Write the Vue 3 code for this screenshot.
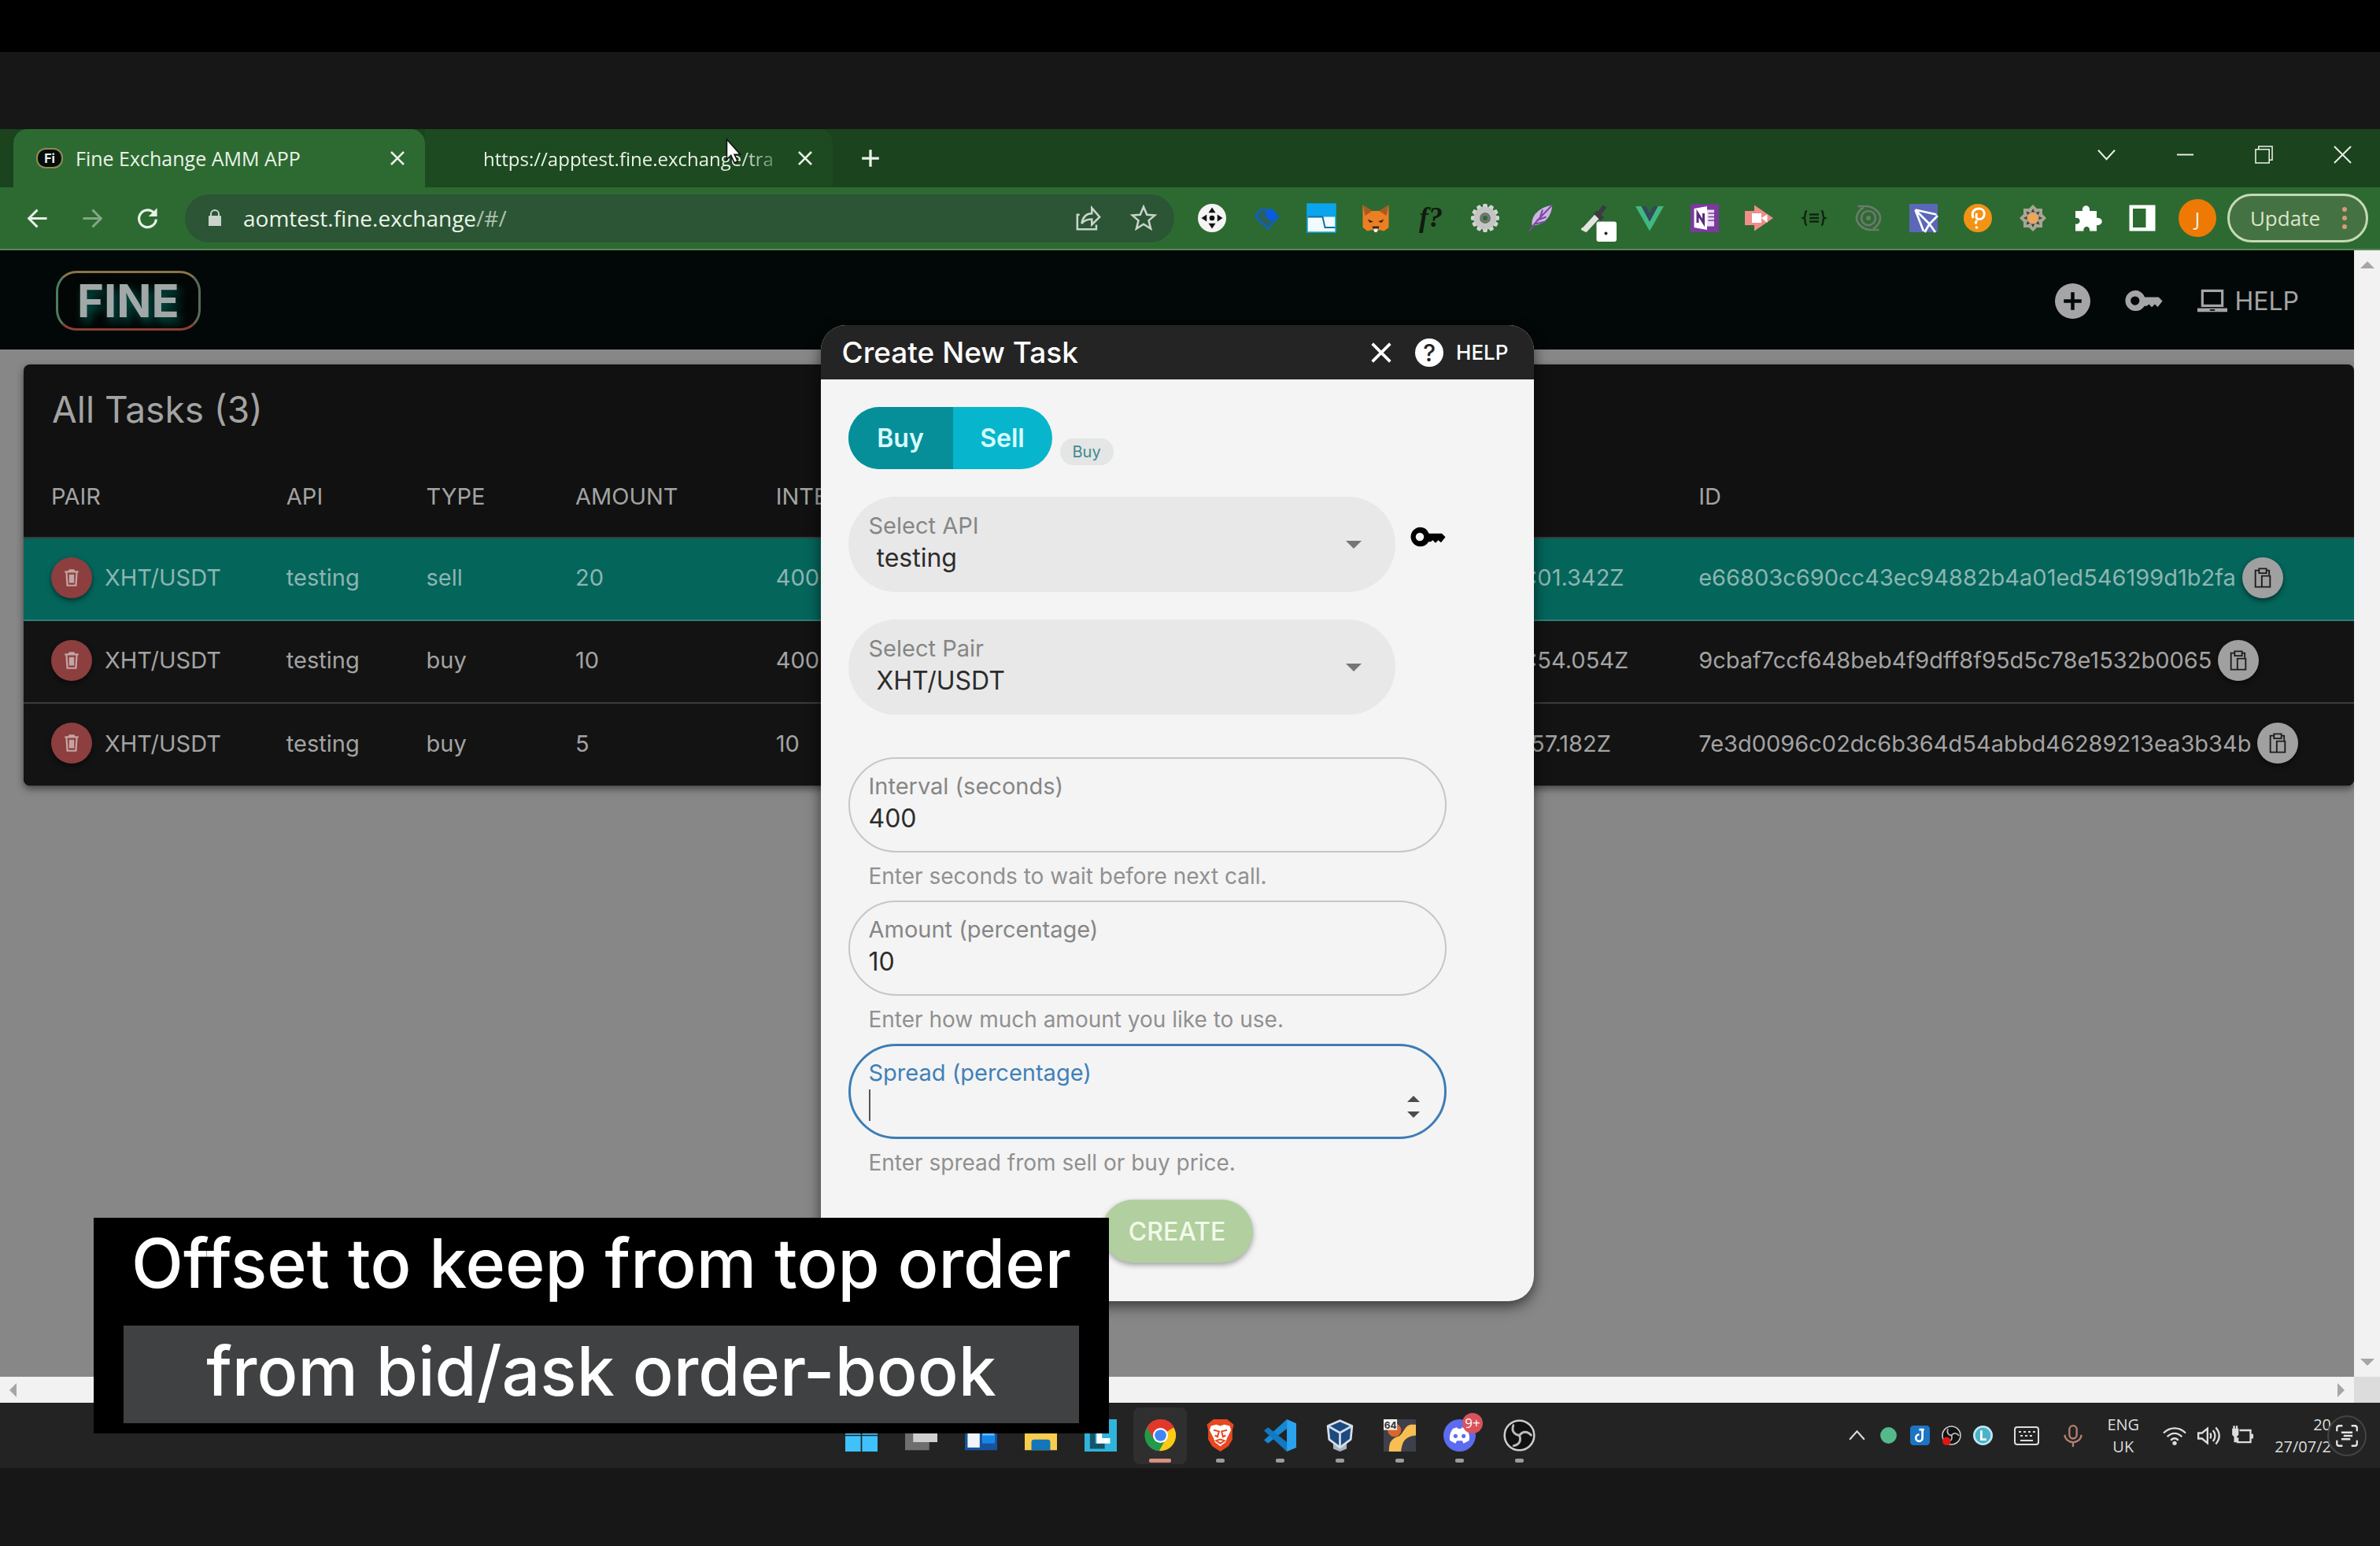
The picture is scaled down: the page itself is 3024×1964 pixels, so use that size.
<template>
  <div class="screen">
    <div class="top-strip"></div>

    <header class="browser">
      <div class="tab-strip">
        <div class="tab is-active">
          <span class="favicon">Fi</span>
          <span class="tab-title">Fine Exchange AMM APP</span>
          <button class="tab-close" aria-label="Close tab" v-html="icons.close"></button>
        </div>
        <div class="tab is-idle">
          <span class="tab-title">https://apptest.fine.exchange/tra</span>
          <button class="tab-close" aria-label="Close tab" v-html="icons.close"></button>
        </div>
        <button class="new-tab" aria-label="New tab" v-html="icons.plus"></button>
        <div class="window-controls">
          <button v-for="c in windowControls" :key="c.label" :aria-label="c.label" v-html="c.svg"></button>
        </div>
        <svg class="cursor" viewBox="0 0 18 30"><path d="M1 1v24l5-5 4 9 4-2-4-8h7z" fill="#fff" stroke="#111" stroke-width="1.5" /></svg>
      </div>

      <div class="toolbar">
        <button class="nav-btn" aria-label="Back" v-html="icons.back"></button>
        <button class="nav-btn is-off" aria-label="Forward" v-html="icons.forward"></button>
        <button class="nav-btn" aria-label="Reload" v-html="icons.reload"></button>
        <div class="address">
          <span class="lock" v-html="icons.lock"></span>
          <span class="url">aomtest.fine.exchange<span class="url-path">/#/</span></span>
          <button aria-label="Share" v-html="icons.share"></button>
          <button aria-label="Bookmark" v-html="icons.star"></button>
        </div>
        <div class="extensions">
          <button v-for="e in extensions" :key="e.label" :aria-label="e.label" v-html="e.svg"></button>
        </div>
        <button class="profile">J</button>
        <button class="update">Update <span class="dots"><i></i><i></i><i></i></span></button>
      </div>
    </header>

    <div class="viewport">
      <main class="page">
        <header class="app-bar">
          <a class="logo" href="#/">FINE</a>
          <nav class="app-nav">
            <button aria-label="Add task" v-html="icons.addCircle"></button>
            <button class="nav-key" aria-label="API keys" v-html="icons.key"></button>
            <a href="#/help"><span v-html="icons.laptop"></span>HELP</a>
          </nav>
        </header>

        <section class="card">
          <h1>All Tasks (3)</h1>
          <table>
            <colgroup>
              <col class="c-pair" /><col class="c-api" /><col class="c-type" /><col class="c-amount" />
              <col class="c-interval" /><col class="c-time" /><col />
            </colgroup>
            <thead>
              <tr>
                <th>PAIR</th><th>API</th><th>TYPE</th><th>AMOUNT</th><th>INTERVAL</th><th></th><th>ID</th>
              </tr>
            </thead>
            <tbody>
              <tr v-for="t in tasks" :key="t.id" :class="{ 'is-selected': t.type === 'sell' }">
                <td>
                  <div class="cell">
                    <button class="round is-delete" aria-label="Delete task" v-html="icons.trash"></button>{{ t.pair }}
                  </div>
                </td>
                <td>{{ t.api }}</td>
                <td>{{ t.type }}</td>
                <td>{{ t.amount }}</td>
                <td>{{ t.interval }}</td>
                <td>{{ t.time }}</td>
                <td>
                  <div class="cell is-id">
                    {{ t.id }}<button class="round is-copy" aria-label="Copy id" v-html="icons.clipboard"></button>
                  </div>
                </td>
              </tr>
            </tbody>
          </table>
        </section>
      </main>
      <div class="scroll-y"><i class="arrow is-up"></i><i class="arrow is-down"></i></div>
      <div class="scroll-x"><i class="arrow is-left"></i><i class="arrow is-right"></i></div>
      <div class="scroll-corner"></div>

      <div class="overlay">
        <div class="dialog" role="dialog" aria-labelledby="dialog-title">
          <div class="dialog-bar">
            <h2 id="dialog-title">Create New Task</h2>
            <button class="dialog-close" aria-label="Close" v-html="icons.close"></button>
            <a href="#/help"><span class="q">?</span>HELP</a>
          </div>
          <form class="dialog-body" @submit.prevent>
            <div class="side-row">
              <div class="side-toggle">
                <button type="button" :class="{ 'is-on': side === 'Buy' }" @click="side = 'Buy'">Buy</button>
                <button type="button" :class="{ 'is-on': side === 'Sell' }" @click="side = 'Sell'">Sell</button>
              </div>
              <span class="chip">{{ side }}</span>
            </div>

            <div class="select-row">
              <div class="field is-select">
                <label for="api">Select API</label>
                <select id="api" v-model="api"><option>testing</option></select>
              </div>
              <button type="button" class="row-key" aria-label="API keys" v-html="icons.key"></button>
            </div>
            <div class="select-row">
              <div class="field is-select">
                <label for="pair">Select Pair</label>
                <select id="pair" v-model="pair"><option>XHT/USDT</option></select>
              </div>
            </div>

            <div class="inputs">
              <template v-for="f in fields" :key="f.id">
                <div class="field is-outlined" :class="{ 'is-focused': f.focused }">
                  <label :for="f.id">{{ f.label }}</label>
                  <input :id="f.id" v-model="f.value" type="number" />
                  <i v-if="f.focused" class="caret"></i>
                  <span v-if="f.focused" class="spinner"><i class="up"></i><i class="down"></i></span>
                </div>
                <p class="hint">{{ f.hint }}</p>
              </template>
            </div>

            <button class="create" type="submit">CREATE</button>
          </form>
        </div>
      </div>
    </div>

    <footer class="taskbar">
      <div class="apps">
        <button v-for="a in apps" :key="a.label" :class="{ 'is-front': a.front, 'is-running': a.running }" :aria-label="a.label">
          <span v-html="a.svg"></span>
          <b v-if="a.badge" class="badge">{{ a.badge }}</b>
        </button>
      </div>
      <div class="tray">
        <span v-for="t in tray" :key="t.label" class="tray-icon" v-html="t.svg"></span>
        <span class="tray-icon is-wide" v-html="icons.keyboard"></span>
        <span class="tray-icon is-wide" v-html="icons.mic"></span>
        <span class="lang">ENG<br />UK</span>
        <span v-for="t in status" :key="t.label" class="tray-icon is-status" v-html="t.svg"></span>
        <span class="clock">20<br />27/07/2</span>
        <button class="scan" aria-label="Live text" v-html="icons.scan"></button>
      </div>
    </footer>
    <div class="bottom-strip"></div>

    <div class="caption">
      <p>Offset to keep from top order</p>
      <p class="is-second">from bid/ask order-book</p>
    </div>
  </div>
</template>

<script setup>
  import { ref, reactive } from 'vue';

  const side = ref('Buy');
  const api = ref('testing');
  const pair = ref('XHT/USDT');

  const fields = reactive([
    { id: 'interval', label: 'Interval (seconds)', value: 400, hint: 'Enter seconds to wait before next call.' },
    { id: 'amount', label: 'Amount (percentage)', value: 10, hint: 'Enter how much amount you like to use.' },
    { id: 'spread', label: 'Spread (percentage)', value: '', hint: 'Enter spread from sell or buy price.', focused: true },
  ]);

  const tasks = [
    { pair: 'XHT/USDT', api: 'testing', type: 'sell', amount: 20, interval: 400, time: ':01.342Z', id: 'e66803c690cc43ec94882b4a01ed546199d1b2fa' },
    { pair: 'XHT/USDT', api: 'testing', type: 'buy', amount: 10, interval: 400, time: ':54.054Z', id: '9cbaf7ccf648beb4f9dff8f95d5c78e1532b0065' },
    { pair: 'XHT/USDT', api: 'testing', type: 'buy', amount: 5, interval: 10, time: '57.182Z', id: '7e3d0096c02dc6b364d54abbd46289213ea3b34b' },
  ];

  const line = (d, w = 2, box = 24) =>
    `<svg viewBox="0 0 ${box} ${box}" fill="none" stroke="currentColor" stroke-width="${w}"><path d="${d}"/></svg>`;
  const solid = (d, box = '0 0 24 24') => `<svg viewBox="${box}" fill="currentColor" fill-rule="evenodd"><path d="${d}"/></svg>`;
  const svg = (body, box = '0 0 24 24') => `<svg viewBox="${box}">${body}</svg>`;

  const icons = {
    close: line('M4 4l16 16M20 4L4 20', 2.6),
    plus: line('M12 2v20M2 12h20', 3),
    back: line('M22 12H3M12 3l-9 9 9 9', 2.4),
    forward: line('M2 12h19M12 3l9 9-9 9', 2.4),
    reload: svg('<path d="M19 6.500A9 9 0 1 0 21 13" fill="none" stroke="currentColor" stroke-width="2.600"/><path d="M22 1v9h-9z" fill="currentColor"/>'),
    lock: solid('M5 9h1V7a6 6 0 0 1 12 0v2h1a1 1 0 0 1 1 1v12H4V10a1 1 0 0 1 1-1zm3 0h8V7a4 4 0 0 0-8 0z'),
    share: line('M4 9H2v13h17v-4M6 17c1-7 5-9 9-9V3l7 8-7 7v-5c-4 0-7 1-9 4z', 1.8),
    star: line('M12 2l3 7 7 .6-5.400 4.600 1.800 7.300L12 17.500l-6.400 4 1.800-7.300L2 9.600 9 9z', 1.8),
    addCircle: solid('M12 0a12 12 0 1 1 0 24 12 12 0 0 1 0-24zM10.800 6v4.800H6v2.400h4.800V18h2.400v-4.800H18v-2.400h-4.800V6z'),
    key: solid('M7 5a7 7 0 0 1 6.600 4.600H23l2.600 2.600-3.200 4-2-1.800-2 2-2-2-1.400 1.200h-1.600A7 7 0 1 1 7 5zm0 4a3 3 0 1 0 0 6 3 3 0 0 0 0-6z', '0 4 26 16'),
    laptop: solid('M3 3h18v14H3zM5 5v10h14V5zM0 18h24v3H0zm10 1v1h4v-1z'),
    trash: solid('M9 2h6l1 2h4v2h-1l-1 16H6L5 6H4V4h4zM7 6l1 14h8l1-14zm2 2h6v10H9z'),
    clipboard: svg('<path d="M8 4H4v18h7M16 4h3v5M8 2h8v5H8zM11 10h9v12h-9z" fill="none" stroke="#1c1c1c" stroke-width="1.600"/>'),
    keyboard: svg('<rect x="1" y="3" width="30" height="22" rx="3" fill="none" stroke="#ddd" stroke-width="2"/><path d="M6 9h3m3 0h3m3 0h3m3 0h3M8 14h3m3 0h3m3 0h3M8 20h16" stroke="#ddd" stroke-width="2"/>', '0 0 32 28'),
    mic: svg('<g fill="none" stroke="#b5806f" stroke-width="2"><rect x="8" y="1" width="8" height="14" rx="4"/><path d="M3 11a9 8 0 0 0 18 0M12 19v5"/></g>'),
    scan: line('M3 8V5a2 2 0 0 1 2-2h3M16 3h3a2 2 0 0 1 2 2v3M21 16v3a2 2 0 0 1-2 2h-3M8 21H5a2 2 0 0 1-2-2v-3M7 9h10M9 12h8M7 15h8', 1.6),
  };

  const windowControls = [
    { label: 'Search tabs', svg: line('M1 6l11 12L23 6', 2) },
    { label: 'Minimise', svg: line('M1 12h22', 2) },
    { label: 'Restore', svg: line('M1 5h18v18H1zM5 5V1h18v18h-4', 1.6) },
    { label: 'Close window', svg: line('M1 1l22 22M23 1L1 23', 2) },
  ];

  // petals and gear teeth are one shape turned round the centre
  const spin = (shape, n) => Array.from({ length: n }, (_, i) => `<g transform="rotate(${(360 / n) * i} 12 12)">${shape}</g>`).join('');
  const obs = '<circle cx="12" cy="12" r="11" fill="#111" stroke="#ccc" stroke-width="1.500"/>' +
    spin('<path d="M12 12C8 11.500 6 8.500 7.500 4.500" fill="none" stroke="#bbb" stroke-width="1.700" stroke-linecap="round"/>', 3);

  const extensions = [
    { label: 'Move', svg: svg('<circle cx="12" cy="12" r="12" fill="#f4f4f4"/><circle cx="12" cy="12" r="2.200" fill="#111"/>' + spin('<path d="M12 3l3 4.500H9z" fill="#111"/>', 4)) },
    { label: 'Gem', svg: svg('<path d="M6 5h11l5 6-9 10L3 11z" fill="#2b5f5c" stroke="#0b63cc" stroke-width="1.500"/><path d="M12 5h5l5 6-6 4-5-5z" fill="#0a5be0"/>') },
    { label: 'Window', svg: svg('<path d="M0 0h24v24H0z" fill="#f2fafd"/><path d="M0 0h24v11H0z" fill="#0aa5ec"/><path d="M0 11h13l2 9h9" fill="none" stroke="#136f9f" stroke-width="1.300"/><path d="M0 0h24v24H0z" fill="none" stroke="#0aa5ec"/>') },
    { label: 'Fox', svg: svg('<path d="M1 1l8 5h6l8-5v12l0 7-4 3-4-1-3 2-3-2-4 1-4-3v-7z" fill="#ec7f22"/><path d="M1 1l8 5-6 4zM23 1l-8 5 6 4z" fill="#a85a24"/><path d="M5 13l5 2-3 1zM19 13l-5 2 3 1zM9 19h6l-1 3h-4z" fill="#3a241b"/><path d="M10 21h4l-1 3h-2z" fill="#eee"/>') },
    { label: 'Function', svg: svg('<text x="12" y="19" text-anchor="middle" font-family="Liberation Serif, serif" font-style="italic" font-weight="700" font-size="24" fill="#101a10">f?</text>') },
    { label: 'Gear', svg: svg(spin('<path d="M10.500 0h3l1 4h-5z" fill="#d4d4d4"/>', 12) + '<circle cx="12" cy="12" r="7" fill="none" stroke="#c4c4c4" stroke-width="5"/><circle cx="12" cy="12" r="4" fill="#777"/><circle cx="12" cy="12" r="2" fill="#2d6a31"/>') },
    { label: 'Feather', svg: svg('<path d="M22 1C11 3 4 10 5 18c8 1 17-6 17-17z" fill="#cdb4e4"/><path d="M22 1C16 8 8 14 3 23M9 14l8-3M8 17l8-2M12 11l2-6" fill="none" stroke="#7a4aa5" stroke-width="1.400"/>') },
    { label: 'Picker', svg: svg('<path d="M3 21l-1 2M3 22L15 9" stroke="#e4e4de" stroke-width="5"/><path d="M12 7l6 6M14 10l6-8" stroke="#3d3a44" stroke-width="4"/><rect x="13" y="15" width="17" height="17" rx="2" fill="#fff"/><circle cx="21" cy="25" r="1.300" fill="#222"/>') },
    { label: 'Vue', svg: svg('<path d="M0 2h5l7 13 7-13h5L12 23z" fill="#41b883"/><path d="M5 2h4l3 6 3-6h4l-7 13z" fill="#34495e"/>') },
    { label: 'OneNote', svg: svg('<path d="M0 0h24v24H0z" fill="#7a3a9e"/><path d="M14 5h6v14h-6z" fill="#e9ddf2"/><path d="M15 8h5M15 11h5M15 14h5" stroke="#7a3a9e"/><path d="M3 4l11-2v20L3 20z" fill="#fff"/><path d="M6 16V8l5 8V8" fill="none" stroke="#5a2a7e" stroke-width="2"/>') },
    { label: 'Recorder', svg: svg('<path d="M0 6h8V1l16 11L8 23v-5H0z" fill="#ef8e8b"/><path d="M6 8h8v8H6zM14 12l5-3v7z" fill="#fff"/>') },
    { label: 'Json', svg: svg('<path d="M6 6C3 6 6 11 3 12c3 1 0 6 3 6M18 6c3 0 0 5 3 6-3 1 0 6-3 6M8 9h8M8 12h8M8 15h8" fill="none" stroke="#122412" stroke-width="1.600"/>') },
    { label: 'Swirl', svg: svg('<g fill="none" stroke="#6a7a6c" stroke-width="1.800"><path d="M3 2h8c7 1 11 6 11 10M21 22h-8C6 21 2 16 2 12"/><circle cx="12" cy="12" r="6"/><path d="M2 12c0-3 2-7 6-9M22 12c0 3-2 7-6 9"/></g><circle cx="12" cy="12" r="2" fill="#6a7a6c"/>') },
    { label: 'Mesh', svg: svg('<path d="M0 0h24v24H0z" fill="#5b67b8"/><path d="M5 5l18 4M5 5l7 18M5 5l12 12 7-7M17 17l-4 7M17 17l5 7" fill="none" stroke="#fff" stroke-width="1.800"/>') },
    { label: 'Pin', svg: svg('<circle cx="12" cy="12" r="12" fill="#f39314"/><path d="M8 12c-2-6 2-8 5-8 6 0 6 9 0 9-2 0-3-1-2-5M11 14l-1 3" fill="none" stroke="#fff" stroke-width="2"/><circle cx="11" cy="20" r="1.200" fill="#fff"/>') },
    { label: 'Sun', svg: svg('<path d="M4 4h16v16H4z" fill="#a9a695"/><path d="M4 4h16v16H4z" fill="#a9a695" transform="rotate(45 12 12)"/>' + spin('<path d="M10.500 7L12 4l1.500 3z" fill="#3d4436"/>', 8) + '<circle cx="12" cy="12" r="4.500" fill="#f0a45c"/>') },
    { label: 'Extensions', svg: svg('<path d="M2 6h6c-1-6 7-6 6 0h6v6c6-1 6 7 0 6v5h-6c1-5-6-5-5 0H2v-6c5 1 5-6 0-5z" fill="#fff"/>') },
    { label: 'Side panel', svg: svg('<path d="M1 1h22v22H1zM4 4v16h11V4z" fill="#fff" fill-rule="evenodd"/>') },
  ];

  const apps = [
    { label: 'Start', svg: svg('<path d="M0 0h11.500v11.500H0zM12.500 0H24v11.500H12.500zM0 12.500h11.500V24H0zM12.500 12.500H24V24H12.500z" fill="#3fc1fb"/>') },
    { label: 'Task view', svg: svg('<path d="M0 7h18v16H0z" fill="#6e6e6e"/><path d="M6 2h18v15H6z" fill="#cfcfcf"/>') },
    { label: 'Widgets', svg: svg('<path d="M0 1h24v22H0z" fill="#17539f"/><path d="M2 3h9v18H2z" fill="#f1f5fb"/><path d="M13 3h9v14h-9z" fill="#62c1f9"/><path d="M13 12h9v6h-9z" fill="#1487e6"/>') },
    { label: 'Explorer', svg: svg('<path d="M0 3h9l3 3h12v17H0z" fill="#f9cd4d"/><path d="M5 23v-6a2 2 0 0 1 2-2h10a2 2 0 0 1 2 2v6z" fill="#1276b8"/>') },
    { label: 'Lens', svg: svg('<path d="M0 0h24v24H0z" fill="#2fb5da"/><path d="M6 4v16h9" fill="none" stroke="#14546a" stroke-width="4"/><path d="M9 3h4v11h6v4H9z" fill="#fff"/>') },
    { label: 'Chrome', front: true, running: true, svg: svg('<circle cx="12" cy="12" r="11.500" fill="#fbc916"/><path d="M12 12L2 6a11.500 11.500 0 0 1 20 0z" fill="#e2382c"/><path d="M12 12L2 6a11.500 11.500 0 0 0 9 17.500l5-9z" fill="#229a4a"/><path d="M12 6.500h10.400A11.500 11.500 0 0 0 2 6l4.500 8z" fill="#e2382c"/><circle cx="12" cy="12" r="5.600" fill="#fff"/><circle cx="12" cy="12" r="4.300" fill="#4285f4"/>') },
    { label: 'Brave', running: true, svg: svg('<path d="M7 0h10l5 4-1 4 0 7-3 5-6 4-6-4-3-5V8L2 4z" fill="#e8471f"/><path d="M5 5l4-1 3 1 3-1 4 1 1 3-3 6-1 3-4 3-4-3-1-3-3-6z" fill="#fff"/><path d="M7 8l4 1-1 4-2-1M17 8l-4 1 1 4 2-1M9 16l3-1 3 1-3 2z" fill="none" stroke="#e8471f" stroke-width="1.200"/>') },
    { label: 'VS Code', running: true, svg: svg('<path d="M17 0l7 3v18l-7 3z" fill="#2aa3ee"/><path d="M17 0v7L3 18l-3-2.500z" fill="#1687d2"/><path d="M17 24v-7L3 6 0 8.500z" fill="#1179bf"/>') },
    { label: 'VirtualBox', running: true, svg: svg('<path d="M7 17h10v5l-5 2-5-2z" fill="#aab3c2"/><path d="M12 1l9 4-1 10-8 6-8-6L3 5z" fill="#1c4a80" stroke="#d5dfe9" stroke-width="1.600" stroke-linejoin="round"/><path d="M3 5l9 5 9-5M12 10v11" fill="none" stroke="#d5dfe9" stroke-width="1.600"/>') },
    { label: 'Editor', running: true, svg: svg('<path d="M0 0h24v24H0z" fill="#3e404a"/><circle cx="8" cy="8" r="5" fill="#d8672b"/><path d="M4 24c0-6 1-9 6-11 5-1 5-8 10-9h4v8c-8 1-10 4-11 12z" fill="#f9be52"/><path d="M0 0h10v8H0z" fill="#f1f1f1"/><text x="5" y="7" text-anchor="middle" font-family="Inter, sans-serif" font-weight="700" font-size="7" fill="#333">64</text>') },
    { label: 'Discord', running: true, badge: '9+', svg: svg('<circle cx="12" cy="12" r="12" fill="#5c6bef"/><path d="M7 7l3-1 1 1h2l1-1 3 1c2 3 3 6 2 9l-4 2-1-2h-4l-1 2-4-2c-1-3 0-6 2-9z" fill="#fff"/><circle cx="9" cy="12.500" r="1.500" fill="#5c6bef"/><circle cx="15" cy="12.500" r="1.500" fill="#5c6bef"/>') },
    { label: 'OBS', running: true, svg: svg(obs) },
  ];

  const tray = [
    { label: 'More', svg: svg('<path d="M3 17l9-10 9 10" fill="none" stroke="#ddd" stroke-width="2"/>') },
    { label: 'Online', svg: svg('<circle cx="12" cy="12" r="10" fill="#55b98b"/>') },
    { label: 'J', svg: svg('<rect width="24" height="24" rx="4" fill="#1c74c4"/><path d="M15 4v11a4 4 0 1 1-4-4M11 5h6" fill="none" stroke="#fff" stroke-width="2.600"/>') },
    { label: 'OBS', svg: svg(obs + '<circle cx="6" cy="19" r="5" fill="#e01515"/>') },
    { label: 'L', svg: svg('<circle cx="12" cy="12" r="12" fill="#bfe9f1"/><circle cx="12" cy="12" r="9.500" fill="#4cb2c9"/><path d="M10 6v11h6" fill="none" stroke="#fff" stroke-width="2.600"/>') },
  ];

  const status = [
    { label: 'Wifi', svg: svg('<g fill="none" stroke="#ddd" stroke-width="2"><path d="M0 9c7-7 17-7 24 0M4 13c5-5 11-5 16 0M8 17c2-3 6-3 8 0"/></g><circle cx="12" cy="20" r="2.300" fill="#ddd"/>') },
    { label: 'Volume', svg: svg('<g fill="none" stroke="#ddd" stroke-width="2"><path d="M1 9h4l6-5v16l-6-5H1zM14 9c1 2 1 4 0 6M17 6c3 4 3 8 0 12M20 3c5 6 5 12 0 18"/></g>') },
    { label: 'Battery', svg: svg('<path d="M9 6h12v13H7v-5" fill="none" stroke="#ddd" stroke-width="2"/><path d="M21 10h3v5h-3zM1 4h7v7l-2 2v6H3v-6l-2-2zM2 1h2v4H2zM5 1h2v4H5z" fill="#ddd"/>') },
  ];
</script>

<style>
  body {
    margin: 0;
    background: #171717;
  }
</style>

<style scoped>
  * {
    box-sizing: border-box;
  }
  .screen {
    position: relative;
    display: flex;
    flex-direction: column;
    min-height: 100vh;
    background: #171717;
    font-family: Inter, "Liberation Sans", sans-serif;
    overflow: hidden;
  }
  button {
    margin: 0;
    padding: 0;
    border: 0;
    background: none;
    color: inherit;
    font: inherit;
    display: inline-flex;
    align-items: center;
    justify-content: center;
  }
  a {
    color: inherit;
    text-decoration: none;
  }
  .screen :deep(svg) {
    display: block;
    width: 100%;
    height: 100%;
    overflow: visible;
  }
  .top-strip {
    height: 66px;
    margin-bottom: 98px;
    background: #000;
  }
  .bottom-strip {
    height: 99px;
  }

  /* browser chrome */
  .browser {
    font-family: "Open Sans", "Noto Sans", sans-serif;
    color: #eaf3ea;
  }
  .tab-strip {
    position: relative;
    display: flex;
    align-items: center;
    height: 74px;
    padding-left: 17px;
    background: #1b431e;
  }
  .tab {
    display: flex;
    align-items: center;
    height: 74px;
    padding: 0 23px 0 29px;
    font-size: 25px;
  }
  .tab.is-active {
    width: 523px;
    gap: 16px;
    background: #2d6a31;
    border-radius: 18px 18px 0 0;
  }
  .tab.is-idle {
    width: 518px;
    padding-left: 74px;
    gap: 16px;
    background: #1d4a20;
    border-radius: 0 18px 0 0;
    font-size: 24px;
  }
  .tab-title {
    flex: 1;
    white-space: nowrap;
  }
  .is-idle .tab-title {
    mask-image: linear-gradient(90deg, #000 85%, rgba(0, 0, 0, .2));
  }
  .favicon {
    width: 34px;
    height: 26px;
    border: 2px solid #8f8a55;
    border-radius: 12px;
    background: #050d0b;
    font: 700 16px/22px Inter, sans-serif;
    text-align: center;
  }
  .tab-close {
    width: 24px;
    height: 24px;
  }
  .new-tab {
    width: 26px;
    height: 26px;
    margin-left: 35px;
  }
  .window-controls {
    display: flex;
    gap: 77px;
    margin-left: auto;
    padding: 0 36px 10px 0;
  }
  .window-controls button {
    width: 23px;
    height: 23px;
  }
  .cursor {
    position: absolute;
    left: 922px;
    top: 12px;
    width: 20px !important;
    height: 32px !important;
  }
  .toolbar {
    display: flex;
    align-items: center;
    height: 80px;
    padding: 0 15px 0 33px;
    background: #2d6a31;
    border-bottom: 2px solid #568659;
  }
  .nav-btn {
    width: 29px;
    height: 29px;
    margin-right: 41px;
  }
  .nav-btn.is-off {
    opacity: .45;
  }
  .address {
    flex: 1;
    display: flex;
    align-items: center;
    height: 61px;
    margin: 0 12px 0 -8px;
    padding: 0 22px 0 26px;
    border-radius: 31px;
    background: #2b5534;
    font-size: 28px;
    color: #c9d5ca;
  }
  .address button {
    width: 34px;
    height: 34px;
    margin-left: 36px;
  }
  .lock {
    width: 24px;
    height: 24px;
    margin-right: 24px;
  }
  .url {
    flex: 1;
    color: #eaf3ea;
  }
  .url-path {
    color: #aebfb0;
  }
  .extensions {
    display: flex;
    justify-content: space-between;
    width: 1254px;
    padding: 0 18px;
  }
  .extensions button {
    width: 36px;
    height: 36px;
  }
  .profile {
    width: 48px;
    height: 48px;
    margin: 0 14px 0 10px;
    border-radius: 50%;
    background: #ee7a05;
    font-size: 24px;
  }
  .update {
    height: 62px;
    padding: 0 24px 0 26px;
    border: 3px solid #c6d9b4;
    border-radius: 31px;
    background: #447243;
    color: #dde6c9;
    font-size: 26px;
    gap: 28px;
  }
  .dots {
    display: grid;
    gap: 5px;
  }
  .dots i {
    width: 6px;
    height: 6px;
    border-radius: 50%;
    background: #d89c78;
  }

  /* web page */
  .viewport {
    position: relative;
    flex: 1;
    display: grid;
    grid-template: 1fr 33px / 1fr 33px;
  }
  .page {
    background: #878787;
    min-width: 0;
  }
  .app-bar {
    display: flex;
    align-items: center;
    justify-content: space-between;
    height: 126px;
    padding: 2px 70px 0 71px;
    background: #020707;
    color: #a5a5a8;
  }
  .logo {
    padding: 0 24px;
    border: 3px solid;
    border-color: #8a7444 #5b6b5d #8e4036 #4c7c62;
    border-radius: 26px;
    background: #020605;
    font-size: 58px;
    font-weight: 700;
    line-height: 70px;
    color: #a2a8a8;
    text-shadow: 4px 6px 12px #00584e;
  }
  .app-nav {
    display: flex;
    align-items: center;
    gap: 43px;
    font-size: 32px;
  }
  .app-nav button {
    width: 45px;
    height: 45px;
  }
  .app-nav .nav-key {
    width: 50px;
    height: 30px;
  }
  .app-nav a {
    display: flex;
    align-items: center;
    gap: 9px;
  }
  .app-nav a span {
    width: 38px;
    height: 38px;
  }
  .card {
    margin: 19px 0 0 30px;
    border-radius: 8px;
    background: #111;
    color: #a3a3a3;
    box-shadow: 0 4px 10px rgba(0, 0, 0, .5);
    overflow: hidden;
  }
  h1 {
    margin: 0;
    padding: 0 36px;
    font-size: 46px;
    font-weight: 400;
    line-height: 115px;
  }
  table {
    width: 100%;
    table-layout: fixed;
    border-collapse: collapse;
    font-size: 29px;
  }
  .c-pair { width: 10.6%; }
  .c-api { width: 6%; }
  .c-type { width: 6.4%; }
  .c-amount { width: 8.6%; }
  .c-interval { width: 32.4%; }
  .c-time { width: 7.2%; }
  th,
  td {
    height: 105px;
    padding: 0 0 0 20px;
    text-align: left;
    font-weight: 400;
    white-space: nowrap;
  }
  td {
    padding-bottom: 4px;
  }
  th:first-child,
  td:first-child {
    padding-left: 35px;
  }
  tbody tr {
    border-top: 2px solid #3b3b3b;
    background: #131313;
  }
  tbody tr.is-selected {
    background: #04655b;
    color: #8db5b0;
  }
  tbody tr.is-selected + tr {
    border-top-color: #2e7f78;
  }
  .cell {
    display: flex;
    align-items: center;
    gap: 16px;
  }
  .cell.is-id {
    gap: 8px;
  }
  .round {
    flex: none;
    width: 52px;
    height: 52px;
    border-radius: 50%;
    box-shadow: 0 3px 6px rgba(0, 0, 0, .5);
  }
  .round.is-delete {
    padding: 13px;
    background: #8d3e3f;
    color: #c4a5a3;
  }
  .round.is-copy {
    padding: 12px;
    background: #a0a0a0;
  }
  .scroll-y,
  .scroll-x {
    display: flex;
    align-items: center;
    justify-content: space-between;
    background: #f2f2f2;
  }
  .scroll-y {
    flex-direction: column;
    padding: 14px 0;
  }
  .scroll-x {
    padding: 0 12px;
  }
  .scroll-corner {
    background: #dcdcdc;
  }
  .arrow {
    border: 9px solid transparent;
  }
  .arrow.is-up { border-top: 0; border-bottom-color: #a6a6a6; }
  .arrow.is-down { border-bottom: 0; border-top-color: #a6a6a6; }
  .arrow.is-left { border-left: 0; border-right-color: #a6a6a6; }
  .arrow.is-right { border-right: 0; border-left-color: #a6a6a6; }

  /* dialog */
  .overlay {
    position: absolute;
    inset: 0 33px 34px 0;
    display: flex;
    align-items: center;
    justify-content: center;
  }
  .dialog {
    width: 906px;
    border-radius: 32px;
    background: #f4f4f4;
    box-shadow: 0 6px 18px rgba(0, 0, 0, .6);
    overflow: hidden;
  }
  .dialog-bar {
    display: flex;
    align-items: center;
    height: 69px;
    padding: 0 32px 0 27px;
    background: #242424;
    color: #fff;
  }
  h2 {
    flex: 1;
    margin: 0;
    font-size: 37px;
    font-weight: 500;
  }
  .dialog-close {
    width: 34px;
    height: 34px;
    margin-right: 26px;
  }
  .dialog-bar a {
    display: flex;
    align-items: center;
    gap: 16px;
    font-size: 26px;
    font-weight: 500;
  }
  .q {
    width: 36px;
    height: 36px;
    border-radius: 50%;
    background: #fff;
    color: #242424;
    font-size: 30px;
    line-height: 36px;
    text-align: center;
  }
  .dialog-body {
    display: flex;
    flex-direction: column;
    gap: 35px;
    padding: 35px 35px 49px;
  }
  .side-row {
    display: flex;
    align-items: flex-end;
    gap: 10px;
  }
  .side-toggle {
    display: flex;
    height: 79px;
    border-radius: 40px;
    background: #07b6cc;
    color: #d9fbff;
    font-size: 32px;
    font-weight: 600;
    overflow: hidden;
  }
  .side-toggle button {
    width: 126px;
  }
  .side-toggle button.is-on {
    width: 133px;
    background: #078f99;
  }
  .chip {
    margin-bottom: 5px;
    padding: 0 16px;
    border-radius: 17px;
    background: #e4e5e5;
    color: #3f8b90;
    font-size: 20px;
    line-height: 34px;
  }
  .select-row {
    display: flex;
    align-items: flex-start;
    gap: 18px;
  }
  .row-key {
    width: 47px;
    height: 28px;
    margin-top: 37px;
    color: #000;
  }
  .field {
    position: relative;
    display: flex;
    flex-direction: column;
    width: 760px;
    height: 121px;
    padding: 19px 26px 0;
    border-radius: 61px;
  }
  .field label {
    font-size: 29px;
    line-height: 36px;
    color: #868686;
  }
  .field select,
  .field input {
    width: 100%;
    height: 44px;
    padding: 0;
    border: 0;
    outline: 0;
    background: none;
    appearance: none;
    font: inherit;
    font-size: 32px;
    color: #2c2c2c;
  }
  .field input {
    appearance: textfield;
  }
  .field.is-select {
    width: 695px;
    background: #e8e8e8;
  }
  .field.is-select select {
    padding-left: 10px;
  }
  .field.is-select::after {
    content: "";
    position: absolute;
    right: 43px;
    top: 56px;
    border: 10px solid transparent;
    border-top-color: #757575;
    border-bottom: 0;
  }
  .field.is-outlined {
    border: 2px solid #c6c6c6;
    padding: 17px 24px 0;
  }
  .field.is-focused {
    border: 3px solid #3d7db5;
    padding: 16px 23px 0;
  }
  .field.is-focused label {
    color: #4180b8;
  }
  .caret {
    position: absolute;
    left: 23px;
    bottom: 20px;
    width: 2px;
    height: 40px;
    background: #555;
  }
  .spinner {
    position: absolute;
    right: 31px;
    bottom: 24px;
    display: grid;
    gap: 12px;
  }
  .spinner i {
    border: 8px solid transparent;
  }
  .spinner .up { border-top: 0; border-bottom-color: #4c4c4c; }
  .spinner .down { border-bottom: 0; border-top-color: #4c4c4c; }
  .inputs {
    margin-top: 19px;
  }
  .hint {
    margin: 0;
    padding-left: 26px;
    font-size: 28px;
    line-height: 61px;
    color: #909090;
  }
  .create {
    align-self: center;
    width: 192px;
    height: 80px;
    margin-top: -19px;
    border-radius: 40px;
    background: #b1cf9f;
    color: #f1fae9;
    font-size: 32px;
    font-weight: 500;
    box-shadow: 0 3px 7px rgba(0, 0, 0, .35);
  }

  /* desktop taskbar */
  .taskbar {
    position: relative;
    display: flex;
    align-items: center;
    justify-content: center;
    height: 83px;
    background: #232323;
    color: #ddd;
    font-family: "Open Sans", "Noto Sans", sans-serif;
  }
  .apps {
    display: flex;
    gap: 8px;
  }
  .apps button {
    position: relative;
    width: 68px;
    height: 72px;
    border-radius: 8px;
  }
  .apps button > span {
    width: 41px;
    height: 41px;
  }
  .apps .is-front {
    background: #2f2f2f;
  }
  .apps .is-running::after {
    content: "";
    position: absolute;
    bottom: 2px;
    width: 11px;
    height: 5px;
    border-radius: 2px;
    background: #9b9b9b;
  }
  .apps .is-front::after {
    width: 28px;
    background: #d99080;
  }
  .badge.badge {
    position: absolute;
    top: 7px;
    right: 4px;
    width: 26px;
    border-radius: 13px;
    background: #d9535b;
    color: #fff;
    font-size: 17px;
    font-weight: 400;
    line-height: 26px;
  }
  .tray {
    position: absolute;
    right: 17px;
    display: flex;
    align-items: center;
    gap: 15px;
    font-size: 20px;
    line-height: 28px;
  }
  .tray-icon {
    width: 25px;
    height: 25px;
  }
  .tray-icon.is-wide {
    width: 32px;
    height: 28px;
    margin-left: 12px;
  }
  .tray-icon.is-status {
    width: 28px;
    height: 28px;
  }
  .lang {
    margin: 0 16px 0 12px;
    text-align: center;
  }
  .clock {
    margin-left: 12px;
    text-align: right;
  }
  .scan {
    width: 50px;
    height: 52px;
    margin-left: -20px;
    padding: 6px;
    border: 2px solid #444;
    border-radius: 50%;
    background: #262626;
    color: #e5e5e5;
  }

  .caption {
    position: absolute;
    left: 119px;
    bottom: 143px;
    padding: 0 38px 13px;
    background: #000;
    color: #fff;
    font-size: 86px;
    font-weight: 500;
    text-align: center;
  }
  .caption p {
    margin: 0;
    padding: 0 10px 8px;
    line-height: 116px;
  }
  .caption .is-second {
    margin-top: 13px;
    background: #404142;
  }
</style>
